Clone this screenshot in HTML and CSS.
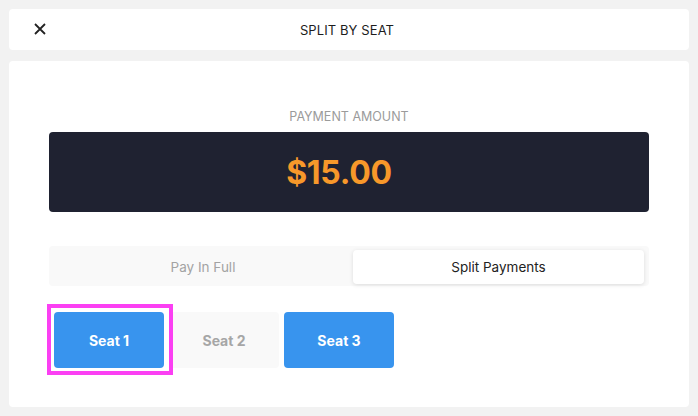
FILE: index.html
```html
<!DOCTYPE html>
<html lang="en">
<head>
    <meta charset="UTF-8">
    <meta name="viewport" content="width=device-width, initial-scale=1.0">
    <title>Split By Seat</title>
    <link rel="stylesheet" href="styles.css">
</head>
<body>

    <div class="header">
        <button class="close" aria-label="Close">
            <svg width="12" height="12" viewBox="0 0 12 12">
                <path d="M1 1L11 11M11 1L1 11" stroke="#222" stroke-width="1.8" fill="none"/>
            </svg>
        </button>
        <div class="title">SPLIT BY SEAT</div>
    </div>

    <div class="panel">
        <div class="amount-label">PAYMENT AMOUNT</div>
        <div class="amount-box">$15.00</div>

        <div class="toggle">
            <div class="toggle-option">Pay In Full</div>
            <div class="toggle-option active">Split Payments</div>
        </div>

        <div class="seats">
            <button class="seat selected focused">Seat 1</button>
            <button class="seat">Seat 2</button>
            <button class="seat selected">Seat 3</button>
        </div>
    </div>

</body>
</html>
```

FILE: styles.css
```css
body {
    font-family: Inter, "Noto Sans", sans-serif;
    background-color: #f2f2f2;
    margin: 0;
    padding: 9px 9px 0 9px;
}
.header {
    position: relative;
    height: 41px;
    background-color: #fff;
    border-radius: 4px;
    display: flex;
    align-items: center;
    justify-content: center;
}
.close {
    position: absolute;
    left: 25px;
    top: 14px;
    padding: 0;
    border: none;
    background: none;
    width: 12px;
    height: 12px;
    display: flex;
}
.title {
    font-size: 13px;
    color: #1d1d1d;
    letter-spacing: 0.1px;
    padding-right: 4px;
}
.panel {
    margin-top: 11px;
    height: 346px;
    background-color: #fff;
    border-radius: 4px;
    padding: 48px 40px 0 40px;
    box-sizing: border-box;
}
.amount-label {
    text-align: center;
    font-size: 12.5px;
    color: #9b9b9b;
    line-height: 16px;
}
.amount-box {
    margin-top: 7px;
    height: 80px;
    background-color: #1f2231;
    border-radius: 4px;
    color: #f7982a;
    font-size: 32px;
    font-weight: 700;
    letter-spacing: -0.3px;
    display: flex;
    align-items: center;
    justify-content: center;
    padding-right: 20px;
}
.toggle {
    margin-top: 34px;
    height: 40px;
    background-color: #f9f9f9;
    border-radius: 4px;
    display: flex;
    padding: 4px 5px 2px 4px;
    box-sizing: border-box;
}
.toggle-option {
    flex: 1;
    display: flex;
    align-items: center;
    justify-content: center;
    font-size: 13.5px;
    color: #a3a3a3;
    border-radius: 4px;
}
.toggle-option.active {
    flex: 0 0 291px;
    background-color: #fff;
    color: #222;
    box-shadow: 0 1px 4px rgba(0, 0, 0, 0.12);
}
.seats {
    margin-top: 26px;
    padding-left: 5px;
    display: flex;
    gap: 5px;
}
.seat {
    width: 110px;
    height: 56px;
    border: none;
    border-radius: 4px;
    background-color: #f9f9f9;
    color: #a6a6a6;
    font-family: inherit;
    font-size: 14px;
    font-weight: 700;
}
.seat.selected {
    background-color: #3894ee;
    color: #fff;
}
.seat.focused {
    position: relative;
    z-index: 1;
}
.seat.focused::after {
    content: "";
    position: absolute;
    top: -8px;
    left: -7px;
    right: -9px;
    bottom: -7px;
    border: 4px solid #fb3ff3;
}
```
